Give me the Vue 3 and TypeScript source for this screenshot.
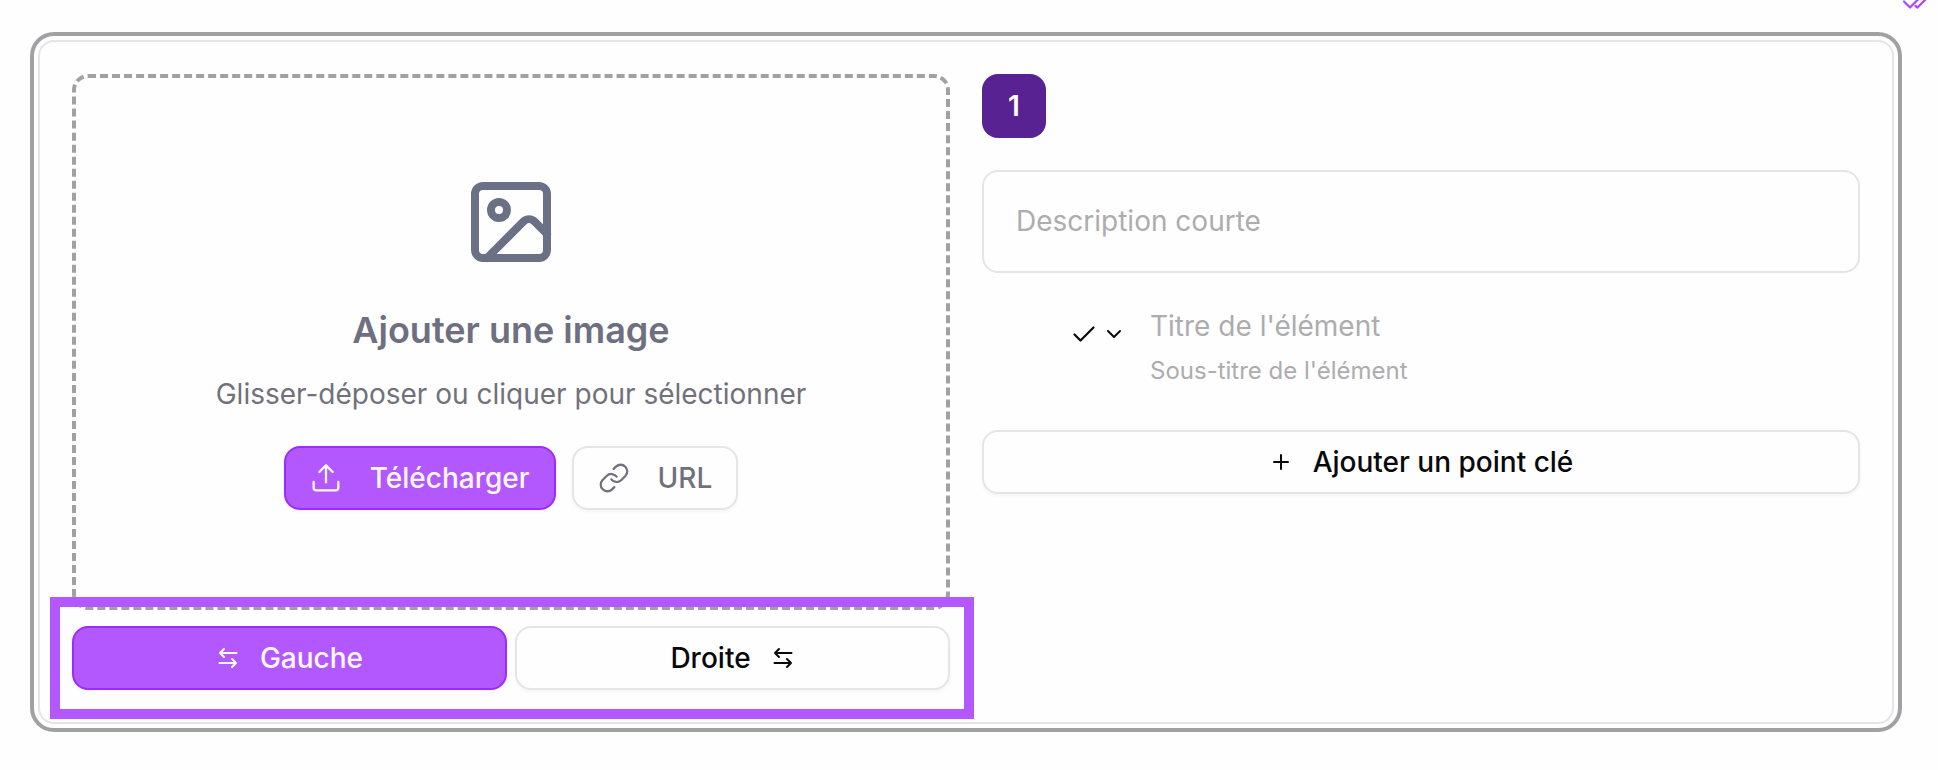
<script setup lang="ts">
import { ref } from 'vue'

type Side = 'left' | 'right'

const side = ref<Side>('left')
const description = ref('')
const itemTitle = ref('')
const itemSubtitle = ref('')
</script>

<template>
  <div class="page">
    <svg class="saved" width="26" height="12" viewBox="0 0 26 12" fill="none" stroke="currentColor" stroke-width="2.2" stroke-linecap="round" stroke-linejoin="round">
      <path d="M3 1.500 9 7.500 17.500-1" />
      <path d="M14.500 6 16.500 7.500 25-1" />
    </svg>

    <section class="card">
      <div class="media">
        <div class="dropzone">
          <svg class="picture" width="96" height="96" viewBox="0 0 24 24" fill="none" stroke="currentColor" stroke-width="2" stroke-linecap="round" stroke-linejoin="round">
            <rect x="3" y="3" width="18" height="18" rx="2" />
            <circle cx="9" cy="9" r="2" />
            <path d="m21 15-3.086-3.086a2 2 0 0 0-2.828 0L6 21" />
          </svg>
          <h2>Ajouter une image</h2>
          <p>Glisser-déposer ou cliquer pour sélectionner</p>
          <div class="actions">
            <button class="btn primary source" type="button">
              <svg width="32" height="32" viewBox="0 0 24 24" fill="none" stroke="currentColor" stroke-width="1.7" stroke-linecap="round" stroke-linejoin="round">
                <path d="M21.250 15v4.250a2 2 0 0 1-2 2H4.750a2 2 0 0 1-2-2V15M17 7.500l-5-5-5 5M12 2.500v12.800" />
              </svg>
              <span>Télécharger</span>
            </button>
            <button class="btn source muted" type="button">
              <svg width="32" height="32" viewBox="0 0 24 24" fill="none" stroke="currentColor" stroke-width="1.7" stroke-linecap="round" stroke-linejoin="round">
                <path d="M10 13a5 5 0 0 0 7.540.540l3-3a5 5 0 0 0-7.070-7.070l-1.720 1.710" />
                <path d="M14 11a5 5 0 0 0-7.540-.540l-3 3a5 5 0 0 0 7.070 7.070l1.710-1.710" />
              </svg>
              <span>URL</span>
            </button>
          </div>
        </div>

        <div class="sides">
          <button class="btn" :class="{ primary: side === 'left' }" type="button" @click="side = 'left'">
            <svg width="24" height="24" viewBox="0 0 24 24" fill="none" stroke="currentColor" stroke-width="2" stroke-linecap="round" stroke-linejoin="round">
              <path d="M20.500 7H4M8 3 4 7l4 4M3.500 17H20M16 13l4 4-4 4" />
            </svg>
            <span>Gauche</span>
          </button>
          <button class="btn" :class="{ primary: side === 'right' }" type="button" @click="side = 'right'">
            <span>Droite</span>
            <svg width="24" height="24" viewBox="0 0 24 24" fill="none" stroke="currentColor" stroke-width="2" stroke-linecap="round" stroke-linejoin="round">
              <path d="M20.500 7H4M8 3 4 7l4 4M3.500 17H20M16 13l4 4-4 4" />
            </svg>
          </button>
        </div>
      </div>

      <div class="details">
        <div class="number">1</div>
        <input v-model="description" class="description" placeholder="Description courte" />
        <div class="item">
          <div class="marker">
            <svg width="24" height="18" viewBox="0 0 24 18" fill="none" stroke="currentColor" stroke-width="2.2" stroke-linecap="round" stroke-linejoin="round">
              <path d="M2.500 9.500 8.500 15.500 21.500 2.500" />
            </svg>
            <svg width="16" height="12" viewBox="0 0 16 12" fill="none" stroke="currentColor" stroke-width="2" stroke-linecap="round" stroke-linejoin="round">
              <path d="m2 3 6 6 6-6" />
            </svg>
          </div>
          <div class="fields">
            <input v-model="itemTitle" class="item-title" placeholder="Titre de l'élément" />
            <input v-model="itemSubtitle" class="item-subtitle" placeholder="Sous-titre de l'élément" />
          </div>
        </div>
        <button class="btn add" type="button">
          <svg width="24" height="24" viewBox="0 0 24 24" fill="none" stroke="currentColor" stroke-width="2" stroke-linecap="round">
            <path d="M5 12h14M12 5v14" />
          </svg>
          <span>Ajouter un point clé</span>
        </button>
      </div>

      <div class="highlight"></div>
    </section>
  </div>
</template>

<style>
body {
  background: #fefefe;
}
</style>

<style scoped>
.page,
.page * {
  box-sizing: border-box;
}

.page {
  position: relative;
  height: 770px;
  padding: 40px 44px 46px 38px;
  overflow: hidden;
  font-family: Inter, "Liberation Sans", sans-serif;
  font-size: 28px;
  color: #09090b;
}

.saved {
  position: absolute;
  top: 0;
  left: 1901px;
  color: #ad46ff;
}

.card {
  position: relative;
  display: grid;
  grid-template-columns: 1fr 1fr;
  gap: 32px;
  height: 684px;
  padding: 32px;
  border: 2px solid #e5e4e7;
  border-radius: 16px;
  outline: 4px solid #a1a0a3;
  outline-offset: 4px;
}

.media {
  display: flex;
  flex-direction: column;
  gap: 16px;
}

.dropzone {
  display: flex;
  flex-direction: column;
  align-items: center;
  justify-content: center;
  height: 536px;
  border: 4px dashed #a1a1a1;
  border-radius: 16px;
  color: #6e6f80;
}

.picture {
  color: #6a7187;
}

h2 {
  margin: 40px 0 24px;
  font-size: 36px;
  font-weight: 600;
  line-height: 40px;
}

p {
  margin: 0 0 32px;
  line-height: 40px;
  color: #71717b;
}

.actions {
  display: flex;
  gap: 16px;
}

.btn {
  display: flex;
  align-items: center;
  justify-content: center;
  gap: 20px;
  height: 64px;
  padding: 0 24px;
  border: 2px solid #e5e4e7;
  border-radius: 16px;
  background: #fefefe;
  box-shadow: 0 2px 4px rgba(0, 0, 0, 0.04);
  font: inherit;
  font-weight: 500;
  line-height: 40px;
  white-space: nowrap;
  color: #09090b;
}

.btn svg {
  flex: none;
}

.source {
  gap: 28px;
}

.btn.muted {
  color: #71717b;
}

.btn.primary {
  border-color: #9d2bff;
  background: #b358ff;
  color: #fffaff;
}

.sides {
  display: grid;
  grid-template-columns: 1fr 1fr;
  gap: 8px;
}

.details {
  display: flex;
  flex-direction: column;
}

.number {
  width: 64px;
  height: 64px;
  border-radius: 16px;
  background: #592293;
  font-weight: 600;
  line-height: 64px;
  text-align: center;
  color: #fff;
}

input {
  display: block;
  width: 100%;
  margin: 0;
  padding: 0;
  border: 0;
  outline: 0;
  background: transparent;
  font: inherit;
  color: #09090b;
}

input::placeholder {
  color: #adacae;
  opacity: 1;
}

.description {
  height: 103px;
  margin-top: 32px;
  padding: 0 32px 1px;
  border: 2px solid #e5e4e7;
  border-radius: 16px;
}

.item {
  display: flex;
  gap: 28px;
  height: 96px;
  margin: 31px 0 30px;
  padding-left: 90px;
}

.marker {
  display: flex;
  align-items: center;
  gap: 10px;
  height: 59px;
}

.fields {
  flex: 1;
}

.item-title {
  height: 44px;
}

.item-subtitle {
  height: 40px;
  margin-top: 2px;
  font-size: 24px;
}

.highlight {
  position: absolute;
  top: 555px;
  left: 10px;
  width: 924px;
  height: 122px;
  border: 10px solid #b358ff;
  pointer-events: none;
}
</style>
